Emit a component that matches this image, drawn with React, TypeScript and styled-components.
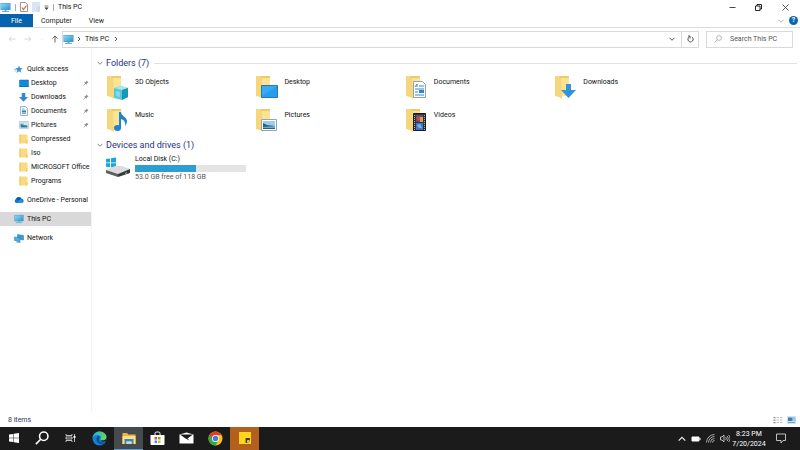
import React from "react";
import styled, { createGlobalStyle } from "styled-components";

const Global = createGlobalStyle`
  *, *::before, *::after { box-sizing: border-box; }
  body { margin: 0; background: #fff; color: #111; font: 7px/10px Roboto, "Noto Sans", sans-serif; }
  button, input { font: inherit; color: inherit; border: 0; background: none; padding: 0; margin: 0; }
  svg { display: block; flex: none; }
  a { color: inherit; text-decoration: none; }
`;

/* ---------- icons ---------- */

type Size = { size?: number };

const MonitorIcon = ({ size = 11 }: Size) => (
  <svg width={size} height={size} viewBox="0 0 22 22" aria-hidden="true">
    <defs>
      <linearGradient id="screen" x1="0" y1="0" x2="1" y2="1">
        <stop offset="0" stopColor="#8bdcf5" />
        <stop offset="1" stopColor="#2a93d5" />
      </linearGradient>
    </defs>
    <rect x="1" y="2" width="20" height="14" fill="#4a94bd" />
    <rect x="2" y="3" width="18" height="12" fill="url(#screen)" />
    <path d="M9 16h4v2H9z" fill="#7aa9c4" />
    <path d="M4 18h14v2H4z" fill="#69b3dc" />
  </svg>
);

const CheckPageIcon = () => (
  <svg width="8" height="10" viewBox="0 0 16 20" aria-hidden="true">
    <path d="M1 1h10l4 4v14H1z" fill="#fff" stroke="#7d7d7d" strokeWidth="1.6" />
    <path d="M4 11l3 4 6-8" fill="none" stroke="#c8662f" strokeWidth="2.2" />
  </svg>
);

const NewFolderIcon = () => (
  <svg width="8" height="10" viewBox="0 0 16 20" aria-hidden="true">
    <path d="M1 1h14v18H1z" fill="#dce4f2" stroke="#c9d3e6" />
    <path d="M11 19V9h4v10z" fill="#c8d2e8" />
  </svg>
);

const CustomizeIcon = () => (
  <svg width="5" height="6" viewBox="0 0 10 12" aria-hidden="true">
    <path d="M1 4h8" stroke="#555" strokeWidth="1.6" />
    <path d="M1 7h8L5 12z" fill="#333" />
  </svg>
);

const Chevron = ({ dir, color = "#444", size = 6 }: { dir: "down" | "right" | "up"; color?: string; size?: number }) => {
  const d = { down: "M1 3.5l5 5 5-5", right: "M4 2l4 4-4 4", up: "M1 8.5l5-5 5 5" }[dir];
  return (
    <svg width={size} height={size} viewBox="0 0 12 12" fill="none" aria-hidden="true">
      <path d={d} stroke={color} strokeWidth="1.8" />
    </svg>
  );
};

const ArrowIcon = ({ dir, color }: { dir: "left" | "right" | "up"; color: string }) => {
  const d = {
    left: "M15 8H2M7 3L2 8l5 5",
    right: "M1 8h13M9 3l5 5-5 5",
    up: "M8 15V2M3 7l5-5 5 5",
  }[dir];
  return (
    <svg width="8" height="8" viewBox="0 0 16 16" fill="none" aria-hidden="true">
      <path d={d} stroke={color} strokeWidth="1.8" />
    </svg>
  );
};

const MinimizeIcon = () => (
  <svg width="7" height="7" viewBox="0 0 14 14" aria-hidden="true">
    <path d="M1 7h12" stroke="#333" strokeWidth="1.8" />
  </svg>
);

const RestoreIcon = () => (
  <svg width="7" height="7" viewBox="0 0 14 14" fill="none" stroke="#111" strokeWidth="1.8" aria-hidden="true">
    <path d="M1 4h9v9H1zM4 4V1h9v9h-3" />
  </svg>
);

const CloseIcon = () => (
  <svg width="7" height="7" viewBox="0 0 14 14" stroke="#333" strokeWidth="1.6" aria-hidden="true">
    <path d="M1 1l12 12M13 1L1 13" />
  </svg>
);

const RefreshIcon = () => (
  <svg width="7" height="8" viewBox="0 0 14 16" fill="none" stroke="#444" strokeWidth="1.9" aria-hidden="true">
    <path d="M9.500 4a5.200 5.200 0 1 1-5 0M2 2h4v5" />
  </svg>
);

const SearchIcon = ({ size = 8, color = "#999", width = 1.4 }: { size?: number; color?: string; width?: number }) => (
  <svg width={size} height={size} viewBox="0 0 16 16" fill="none" stroke={color} strokeWidth={width} aria-hidden="true">
    <circle cx="10" cy="6" r="4.800" />
    <path d="M6.500 9.500L1 15" />
  </svg>
);

const StarIcon = () => (
  <svg width="9" height="9" viewBox="0 0 18 18" aria-hidden="true">
    <path d="M10 1l2 5.200 5.500.4-4.300 3.600 1.400 5.500L10 12.700l-5 3.300 1.700-5.600L2.500 6.600l5.500-.4z" fill="#3a93cf" />
    <path d="M0 9h5M1 12h4" stroke="#7dbbe0" strokeWidth="1.400" />
  </svg>
);

const DesktopIcon = () => (
  <svg width="10" height="9" viewBox="0 0 20 18" aria-hidden="true">
    <path d="M1 2h18v13H1z" fill="#1189dc" stroke="#0b6cb3" />
    <path d="M1 14h18v2H1z" fill="#0a70c0" />
  </svg>
);

const DownArrowIcon = ({ size = 9 }: Size) => (
  <svg width={size} height={size} viewBox="0 0 18 18" aria-hidden="true">
    <path d="M5.500 0h7v8H18l-9 9.500L0 8h5.500z" fill="#3289d0" />
  </svg>
);

const DocumentIcon = () => (
  <svg width="8" height="10" viewBox="0 0 16 20" aria-hidden="true">
    <path d="M1 1h10l4 4v14H1z" fill="#f4f9fc" stroke="#7c98a9" strokeWidth="1.400" />
    <path d="M4 6h5M4 9h8M4 15h8" stroke="#4d9dcc" strokeWidth="1.500" />
    <path d="M4 10h8v3H4z" fill="#2e84bd" />
  </svg>
);

const PictureIcon = () => (
  <svg width="10" height="8" viewBox="0 0 20 16" aria-hidden="true">
    <path d="M1 1h18v14H1z" fill="#e8f2f8" stroke="#8faec1" />
    <path d="M3 3h14v5H3z" fill="#9fd0ea" />
    <path d="M3 6l6 2 8 1v4H3z" fill="#34789f" />
    <path d="M10 5h7v2h-7z" fill="#fff" />
  </svg>
);

const FolderIcon = () => (
  <svg width="9" height="10" viewBox="0 0 18 20" aria-hidden="true">
    <path d="M1 1h14l2 2v16H1z" fill="#f9da80" />
    <path d="M1 1h2v18H1z" fill="#ecc45d" />
    <path d="M14 12h3v7h-3z" fill="#f1cb67" />
  </svg>
);

const CloudIcon = () => (
  <svg width="10" height="8" viewBox="0 0 20 16" aria-hidden="true">
    <path d="M5 14a4 4 0 0 1-.800-7.800A5.500 5.500 0 0 1 14.500 5 4.600 4.600 0 0 1 16 14z" fill="#1277c9" />
    <path d="M4.200 6.200A5.500 5.500 0 0 1 14.500 5L9 9z" fill="#0a5aa8" />
    <path d="M5 14l8-7.500a4.500 4.500 0 0 1 3 7.500z" fill="#2492df" />
  </svg>
);

const NetworkIcon = () => (
  <svg width="10" height="9" viewBox="0 0 20 18" aria-hidden="true">
    <path d="M7 1l12 2v9L7 10z" fill="#3b9bd2" stroke="#2a76a5" />
    <path d="M1 6l11 1.500V15L1 13z" fill="#49b1e5" stroke="#24719f" />
    <path d="M5 15h8v2H5z" fill="#3b7fa8" />
  </svg>
);

const PinIcon = () => (
  <svg width="6" height="6" viewBox="0 0 12 12" aria-hidden="true">
    <path d="M7 1l4 4-1.500.5-2 2L7 10 2 5l2.500-.5 2-2z" fill="#8a9096" />
    <path d="M4.500 7.500L1 11" stroke="#8a9096" strokeWidth="1.300" />
  </svg>
);

type FolderKind = "objects" | "desktop" | "documents" | "downloads" | "music" | "pictures" | "videos";

const badges: Record<FolderKind, React.ReactNode> = {
  objects: (
    <g>
      <path d="M9 13l7-2 7 2v9l-6 3-8-2z" fill="#58c7d8" />
      <path d="M9 13l7-2 7 2-6 2z" fill="#a7e8ef" />
      <path d="M17 15l6-2v9l-6 3z" fill="#1598b3" />
      <path d="M11 16l4 1v5l-4-1z" fill="#82dce7" />
    </g>
  ),
  desktop: (
    <g>
      <path d="M7.500 10.500h16v12h-16z" fill="#259ef0" stroke="#2677ac" />
      <path d="M8 11h15l-15 10z" fill="#39aaf4" />
    </g>
  ),
  documents: (
    <g>
      <path d="M9.500 6.500h9l3 3v13h-12z" fill="#fafdff" stroke="#8fa3b0" />
      <path d="M11 12l2-3v3M15 11h5M11 14h9M11 17h3M11 20h9" stroke="#4289bd" fill="none" />
      <path d="M15 15h5v3h-5z" fill="#3485bd" />
    </g>
  ),
  downloads: <path d="M13 9h5v6h5l-7.500 8L8 15h5z" fill="#3292da" />,
  music: (
    <g>
      <path d="M14 4h2c0 4 6 5 6 9 0 2-1 4-2 5 1-4-1-6-4-7v9h-2z" fill="#1f83cb" />
      <ellipse cx="12.500" cy="20" rx="3.500" ry="3" fill="#1f83cb" />
    </g>
  ),
  pictures: (
    <g>
      <path d="M7.500 11.500h15v11h-15z" fill="#fff" stroke="#91a7b5" />
      <path d="M9 13h12v8H9z" fill="#9bcdf0" />
      <path d="M9 15l4 2 8 1v3H9z" fill="#2d6276" />
      <path d="M9 19l12-1v2H9z" fill="#6bacca" />
    </g>
  ),
  videos: (
    <g>
      <path d="M9.500 5.500h12v17h-12z" fill="#30333b" stroke="#17191e" />
      <path d="M12 7h7v7h-7z" fill="#6a4b70" />
      <path d="M12 15h7v7h-7z" fill="#4277c2" />
      <path d="M12 10l3-2 2 2-2 3z" fill="#c64c4d" />
      <path d="M16 9h3v5h-3z" fill="#d9a441" />
      <path d="M13 17l3-1 2 4h-3z" fill="#77b8ee" />
      <path d="M10.500 7v15M20.500 7v15" stroke="#aab1bd" strokeDasharray="1 1" />
    </g>
  ),
};

const BigFolderIcon = ({ kind }: { kind: FolderKind }) => (
  <svg width="25" height="25" viewBox="0 0 25 25" aria-hidden="true">
    <path d="M6 1h10v20H6z" fill="#efca66" />
    <path d="M2 1h3l4 3v20l-3-2-4-1z" fill="#f5d67a" />
    <path d="M8 3h8v18H9z" fill="#fbe396" />
    {badges[kind]}
  </svg>
);

const DriveIcon = () => (
  <svg width="26" height="24" viewBox="0 0 26 24" aria-hidden="true">
    <path d="M1 5l4-.6v4H1zM6 4.200l5-.7v4.900H6zM1 9.300h4v4l-4-.6zM6 9.300h5v4.800l-5-.7z" fill="#1ba5dc" />
    <path d="M1 16l9-4h7l8 3-12 5z" fill="#dadcdd" />
    <path d="M1 16l12 4v3L1 19z" fill="#5c5f62" />
    <path d="M13 20l12-5v4l-12 4z" fill="#36393b" />
    <path d="M20 19.500l2-.8" stroke="#9fd18b" />
  </svg>
);

const DetailsViewIcon = () => (
  <svg width="10" height="8" viewBox="0 0 20 16" aria-hidden="true">
    <path d="M1 3h4M1 8h4M1 13h4" stroke="#8c8c8c" strokeWidth="2.500" />
    <path d="M7 3h5M14 3h5M7 8h5M14 8h5M7 13h5M14 13h5" stroke="#aaa" strokeWidth="1.500" />
  </svg>
);

const TilesViewIcon = () => (
  <svg width="9" height="8" viewBox="0 0 18 16" aria-hidden="true">
    <path d="M0 0h18v16H0z" fill="#cbe6f8" />
    <path d="M2 3h9v7H2z" fill="#3f7fb0" />
    <path d="M12 4h5M12 8h5M2 13h14" stroke="#5c90b5" strokeWidth="1.500" />
  </svg>
);

/* ---------- taskbar icons ---------- */

const WindowsIcon = () => (
  <svg width="10" height="10" viewBox="0 0 20 20" fill="#fff" aria-hidden="true">
    <path d="M0 3l8.500-1.200v7.700H0zM9.500 1.600L20 0v9.500H9.500zM0 10.500h8.500v7.700L0 17zM9.500 10.500H20V20L9.500 18.400z" />
  </svg>
);

const TaskViewIcon = () => (
  <svg width="12" height="10" viewBox="0 0 24 20" fill="none" stroke="#ddd" strokeWidth="1.700" aria-hidden="true">
    <path d="M2 2v3h12V2M2 18v-3h12v3M2 8h12v4H2zM19 2v16" />
    <path d="M17 6h4v4h-4z" fill="#fff" stroke="none" />
  </svg>
);

const EdgeIcon = () => (
  <svg width="15" height="15" viewBox="0 0 30 30" aria-hidden="true">
    <defs>
      <linearGradient id="edgeTop" x1="0" y1="0" x2="1" y2="0.400">
        <stop offset="0" stopColor="#25a9e2" />
        <stop offset="1" stopColor="#66d65e" />
      </linearGradient>
    </defs>
    <circle cx="15" cy="15" r="14" fill="#1580d4" />
    <path d="M1 14C2 6 8 1 15 1c8 0 14 5 14 11 0 5-4 7-8 7-3 0-5-1-4-3 3-5-1-8-6-8C6 8 2 10 1 14z" fill="url(#edgeTop)" />
    <path d="M11 11c-4 5-2 13 5 15 5 1 9-1 11-4-7 3-14 0-13-6 0-2 1-3 2-4-2-2-4-2-5-1z" fill="#0d4f9c" />
    <path d="M17 16c-1 2 1 3 4 3 4 0 8-2 8-6v6l-3 2c-6 1-10-1-9-5z" fill="#1b1b1b" />
  </svg>
);

const ExplorerIcon = () => (
  <svg width="14" height="13" viewBox="0 0 28 26" aria-hidden="true">
    <path d="M1 2h9l3 3h14v19H1z" fill="#e9b54a" />
    <path d="M1 8h26v16H1z" fill="#ffdf7e" />
    <path d="M5 14h18v10h-4v-5H9v5H5z" fill="#3b83b9" />
    <path d="M9 19h10v5H9z" fill="#b8dcec" />
  </svg>
);

const StoreIcon = () => (
  <svg width="15" height="15" viewBox="0 0 30 30" aria-hidden="true">
    <path d="M10 8V5a3 3 0 0 1 3-3h4a3 3 0 0 1 3 3v3" fill="none" stroke="#fff" strokeWidth="2" />
    <path d="M1 8h28v18a2 2 0 0 1-2 2H3a2 2 0 0 1-2-2z" fill="#fff" />
    <path d="M9 12h5v5H9z" fill="#e6502b" />
    <path d="M16 12h5v5h-5z" fill="#74b72b" />
    <path d="M9 19h5v5H9z" fill="#2a9de0" />
    <path d="M16 19h5v5h-5z" fill="#f5b51c" />
  </svg>
);

const MailIcon = () => (
  <svg width="15" height="12" viewBox="0 0 30 24" aria-hidden="true">
    <path d="M1 5l14-4 14 4v18H1z" fill="#fff" />
    <path d="M2 5h26L17 13l4 4-8-4z" fill="#1b1b1b" />
  </svg>
);

const ChromeIcon = () => (
  <svg width="15" height="15" viewBox="0 0 30 30" aria-hidden="true">
    <circle cx="15" cy="15" r="14" fill="#fbc116" />
    <path d="M2.900 8A14 14 0 0 1 27.100 8H15a7 7 0 0 0-6.100 10.500z" fill="#e33b2e" />
    <path d="M2.900 8A14 14 0 0 0 15 29l6.100-10.500A7 7 0 0 1 8.900 18.500z" fill="#2da94f" />
    <circle cx="15" cy="15" r="7" fill="#fff" />
    <circle cx="15" cy="15" r="5.500" fill="#3f7fe8" />
  </svg>
);

const NotesIcon = () => (
  <svg width="12" height="12" viewBox="0 0 22 22" aria-hidden="true">
    <path d="M0 0h22v22H0z" fill="#ffd51c" />
    <path d="M12 11h8v5l-4 4h-4z" fill="#4b3b14" />
    <path d="M15 20v-5h5z" fill="#fff2a0" />
  </svg>
);

const BatteryIcon = () => (
  <svg width="10" height="6" viewBox="0 0 20 12" aria-hidden="true">
    <path d="M2 2h14v8H2z" fill="#fff" stroke="#fff" strokeWidth="2" />
    <path d="M17 4h2v4h-2z" fill="#fff" />
  </svg>
);

const WifiIcon = () => (
  <svg width="9" height="9" viewBox="0 0 18 18" fill="none" stroke="#ccc" strokeWidth="1.600" aria-hidden="true">
    <path d="M1 17A16 16 0 0 1 17 1M5 17A12 12 0 0 1 17 5M9 17a8 8 0 0 1 8-8M13 17a4 4 0 0 1 4-4" />
  </svg>
);

const VolumeIcon = () => (
  <svg width="10" height="9" viewBox="0 0 20 18" fill="none" stroke="#ddd" strokeWidth="1.600" aria-hidden="true">
    <path d="M1 6h3l4-4v14l-4-4H1zM11 6c2 2 2 4 0 6M14 4c3 3 3 7 0 10M17 2c4 4 4 10 0 14" />
  </svg>
);

const ActionCenterIcon = () => (
  <svg width="10" height="11" viewBox="0 0 20 22" fill="none" stroke="#ddd" strokeWidth="1.700" aria-hidden="true">
    <path d="M1 2h18v13h-5l-4 5v-5H1z" />
  </svg>
);

/* ---------- layout ---------- */

const Window = styled.div`
  display: flex;
  flex-direction: column;
  min-height: 100vh;
`;

const TitleBar = styled.header`
  display: flex;
  align-items: center;
  justify-content: space-between;
  height: 14px;
`;

const QuickTools = styled.div`
  display: flex;
  align-items: center;
  gap: 4px;
`;

const WindowControls = styled.div`
  display: flex;
  align-items: center;
  padding-right: 2px;
`;

const Divider = styled.span`
  width: 1px;
  height: 7px;
  background: #aaa;
`;

const Title = styled.h1`
  margin: 0;
  font: inherit;
`;

const IconButton = styled.button<{ $w?: number }>`
  display: flex;
  align-items: center;
  justify-content: center;
  width: ${(p) => (p.$w ? `${p.$w}px` : "auto")};
`;

const Ribbon = styled.nav`
  display: flex;
  height: 14px;
  border-bottom: 1px solid #dcdcdc;
`;

const Tab = styled.button<{ $primary?: boolean }>`
  height: 13px;
  padding: 0 ${(p) => (p.$primary ? 11 : 8)}px;
  margin-right: ${(p) => (p.$primary ? 0 : 1)}px;
  background: ${(p) => (p.$primary ? "#0863ad" : "transparent")};
  color: ${(p) => (p.$primary ? "#fff" : "#222")};
`;

const RibbonEnd = styled.div`
  display: flex;
  align-items: center;
  gap: 5px;
  margin-left: auto;
  padding-right: 2px;
`;

const Help = styled.button`
  width: 9px;
  height: 9px;
  border-radius: 50%;
  background: #0b66b0;
  color: #fff;
  line-height: 9px;
  font-weight: 700;
`;

const AddressRow = styled.div`
  display: flex;
  align-items: center;
  height: 22px;
  padding: 0 7px 0 4px;
`;

const History = styled.div`
  display: flex;
  align-items: center;
  width: 58px;
`;

const AddressBox = styled.div`
  display: flex;
  align-items: center;
  flex: 1;
  height: 17px;
  border: 1px solid #d9d9d9;
`;

const Crumb = styled.button`
  display: flex;
  align-items: center;
  padding-right: 4px;
`;

const CrumbArrow = styled(Crumb)`
  padding: 0 3px 0 2px;
`;

const BoxEnd = styled.div`
  display: flex;
  align-items: center;
  height: 15px;
  margin-left: auto;
`;

const RefreshButton = styled(IconButton)`
  height: 15px;
  border-left: 1px solid #d9d9d9;
`;

const SearchBox = styled.label`
  display: flex;
  align-items: center;
  gap: 8px;
  width: 87px;
  height: 17px;
  margin-left: 7px;
  padding: 0 7px;
  border: 1px solid #d9d9d9;
`;

const SearchInput = styled.input`
  flex: 1;
  min-width: 0;
  outline: 0;
  &::placeholder { color: #555; opacity: 1; }
`;

const Body = styled.div`
  display: flex;
  flex: 1;
`;

const Sidebar = styled.nav`
  flex: none;
  width: 92px;
  padding-top: 12px;
  border-right: 1px solid #f4f4f4;
`;

const NavGroup = styled.ul`
  margin: 0 0 5px;
  padding: 0;
  list-style: none;
`;

const NavLink = styled.a<{ $child?: boolean; $selected?: boolean }>`
  display: flex;
  align-items: center;
  height: 14px;
  gap: ${(p) => (p.$child ? 2 : 3)}px;
  padding-left: ${(p) => (p.$child ? 18 : 13)}px;
  background: ${(p) => (p.$selected ? "#d9d9d9" : "transparent")};
  white-space: nowrap;
`;

const NavIcon = styled.span`
  display: flex;
  justify-content: center;
  flex: none;
  width: 11px;
`;

const PinSlot = styled.span`
  margin-left: auto;
  padding-right: 2px;
`;

const Main = styled.main`
  flex: 1;
  padding: 7px 3px 0 5px;
`;

const GroupHead = styled.h2`
  display: flex;
  align-items: center;
  gap: 3px;
  margin: 0;
  height: 12px;
  color: #1e3287;
  font-size: 9px;
  font-weight: 400;
  line-height: 12px;
  &::after {
    content: "";
    flex: 1;
    height: 1px;
    margin-left: 2px;
    background: #e2e2e2;
  }
  &:last-of-type::after { background: transparent; }
`;

const Tiles = styled.div`
  display: grid;
  grid-template-columns: repeat(4, minmax(0, 149fr)) minmax(0, 94fr);
  grid-auto-rows: 33px;
  padding: 6px 0 0 8px;
  margin-bottom: -2px;
`;

const Tile = styled.button`
  display: flex;
  align-items: flex-start;
  gap: 5px;
  text-align: left;
  &:nth-child(5) { grid-column: 1; }
`;

const TileName = styled.span`
  padding-top: 2px;
`;

const Drive = styled.button`
  display: flex;
  align-items: flex-start;
  gap: 4px;
  padding: 3px 0 0 8px;
  text-align: left;
`;

const DriveInfo = styled.span`
  display: flex;
  flex-direction: column;
  width: 111px;
`;

const Meter = styled.span`
  display: block;
  height: 7px;
  margin-top: 1px;
  background: #e4e4e4;
`;

const MeterFill = styled.span`
  display: block;
  height: 7px;
  background: #2c9ed3;
`;

const FreeSpace = styled.span`
  color: #555;
`;

const StatusBar = styled.footer`
  display: flex;
  align-items: center;
  justify-content: space-between;
  height: 14px;
  padding: 0 4px 0 8px;
  color: #2c3c55;
`;

const ViewButtons = styled.div`
  display: flex;
  gap: 4px;
`;

const Taskbar = styled.div`
  display: flex;
  align-items: stretch;
  justify-content: space-between;
  height: 23px;
  background: #1b1b1b;
  color: #fff;
`;

const Apps = styled.div`
  display: flex;
`;

const AppButton = styled.button<{ $state?: "active" | "alert" }>`
  display: flex;
  align-items: center;
  justify-content: center;
  width: 29px;
  background: ${(p) => (p.$state === "active" ? "#474a4c" : p.$state === "alert" ? "#b3601f" : "transparent")};
  border-bottom: 1px solid ${(p) => (p.$state === "active" ? "#5b9bd0" : "transparent")};
  &:nth-child(-n + 2) { width: 28px; }
`;

const Tray = styled.div`
  display: flex;
  align-items: center;
  gap: 2px;
  padding-right: 14px;
`;

const TrayIcons = styled.div`
  display: flex;
  align-items: center;
  gap: 5px;
`;

const Clock = styled.time`
  width: 34px;
  margin-right: 8px;
  text-align: center;
`;

const pinned = [
  { name: "Desktop", icon: <DesktopIcon />, pin: true },
  { name: "Downloads", icon: <DownArrowIcon />, pin: true },
  { name: "Documents", icon: <DocumentIcon />, pin: true },
  { name: "Pictures", icon: <PictureIcon />, pin: true },
  { name: "Compressed", icon: <FolderIcon /> },
  { name: "Iso", icon: <FolderIcon /> },
  { name: "MICROSOFT Office", icon: <FolderIcon /> },
  { name: "Programs", icon: <FolderIcon /> },
];

const places = [
  { name: "OneDrive - Personal", icon: <CloudIcon /> },
  { name: "This PC", icon: <MonitorIcon size={10} />, selected: true },
  { name: "Network", icon: <NetworkIcon /> },
];

const folders: { name: string; kind: FolderKind }[] = [
  { name: "3D Objects", kind: "objects" },
  { name: "Desktop", kind: "desktop" },
  { name: "Documents", kind: "documents" },
  { name: "Downloads", kind: "downloads" },
  { name: "Music", kind: "music" },
  { name: "Pictures", kind: "pictures" },
  { name: "Videos", kind: "videos" },
];

const apps: { name: string; icon: React.ReactNode; state?: "active" | "alert" }[] = [
  { name: "Start", icon: <WindowsIcon /> },
  { name: "Search", icon: <SearchIcon size={14} color="#fff" width={1.800} /> },
  { name: "Task view", icon: <TaskViewIcon /> },
  { name: "Edge", icon: <EdgeIcon /> },
  { name: "File Explorer", icon: <ExplorerIcon />, state: "active" },
  { name: "Store", icon: <StoreIcon /> },
  { name: "Mail", icon: <MailIcon /> },
  { name: "Chrome", icon: <ChromeIcon /> },
  { name: "Sticky Notes", icon: <NotesIcon />, state: "alert" },
];

export default function App() {
  const used = 65 / 118;
  return (
    <>
      <Global />
      <Window>
        <TitleBar>
          <QuickTools>
            <MonitorIcon />
            <Divider />
            <IconButton aria-label="Properties"><CheckPageIcon /></IconButton>
            <IconButton aria-label="New folder"><NewFolderIcon /></IconButton>
            <IconButton aria-label="Customize toolbar"><CustomizeIcon /></IconButton>
            <Divider />
            <Title>This PC</Title>
          </QuickTools>
          <WindowControls>
            <IconButton $w={26} aria-label="Minimize"><MinimizeIcon /></IconButton>
            <IconButton $w={27} aria-label="Restore"><RestoreIcon /></IconButton>
            <IconButton $w={26} aria-label="Close"><CloseIcon /></IconButton>
          </WindowControls>
        </TitleBar>

        <Ribbon aria-label="Ribbon">
          <Tab $primary>File</Tab>
          <Tab>Computer</Tab>
          <Tab>View</Tab>
          <RibbonEnd>
            <IconButton aria-label="Expand ribbon"><Chevron dir="down" color="#aaa" /></IconButton>
            <Help aria-label="Help">?</Help>
          </RibbonEnd>
        </Ribbon>

        <AddressRow>
          <History>
            <IconButton $w={16} aria-label="Back"><ArrowIcon dir="left" color="#d4d4d4" /></IconButton>
            <IconButton $w={16} aria-label="Forward"><ArrowIcon dir="right" color="#d4d4d4" /></IconButton>
            <IconButton $w={12} aria-label="Recent locations"><Chevron dir="down" color="#ddd" size={4} /></IconButton>
            <IconButton $w={14} aria-label="Up"><ArrowIcon dir="up" color="#555" /></IconButton>
          </History>
          <AddressBox>
            <MonitorIcon />
            <CrumbArrow aria-label="Root"><Chevron dir="right" /></CrumbArrow>
            <Crumb as="a" href="#this-pc">This PC</Crumb>
            <Chevron dir="right" />
            <BoxEnd>
              <IconButton $w={18} aria-label="Previous locations"><Chevron dir="down" /></IconButton>
              <RefreshButton $w={17} aria-label="Refresh"><RefreshIcon /></RefreshButton>
            </BoxEnd>
          </AddressBox>
          <SearchBox>
            <SearchIcon />
            <SearchInput aria-label="Search This PC" placeholder="Search This PC" />
          </SearchBox>
        </AddressRow>

        <Body>
          <Sidebar aria-label="Navigation pane">
            <NavGroup>
              <li>
                <NavLink href="#quick-access"><NavIcon><StarIcon /></NavIcon>Quick access</NavLink>
              </li>
              {pinned.map((p) => (
                <li key={p.name}>
                  <NavLink $child href={`#${p.name}`}>
                    <NavIcon>{p.icon}</NavIcon>
                    {p.name}
                    {p.pin && <PinSlot><PinIcon /></PinSlot>}
                  </NavLink>
                </li>
              ))}
            </NavGroup>
            {places.map((p) => (
              <NavGroup key={p.name}>
                <li>
                  <NavLink href={`#${p.name}`} $selected={p.selected}>
                    <NavIcon>{p.icon}</NavIcon>
                    {p.name}
                  </NavLink>
                </li>
              </NavGroup>
            ))}
          </Sidebar>

          <Main>
            <GroupHead><Chevron dir="down" color="#777" />Folders (7)</GroupHead>
            <Tiles>
              {folders.map((f) => (
                <Tile key={f.name}>
                  <BigFolderIcon kind={f.kind} />
                  <TileName>{f.name}</TileName>
                </Tile>
              ))}
            </Tiles>
            <GroupHead><Chevron dir="down" color="#777" />Devices and drives (1)</GroupHead>
            <Drive>
              <DriveIcon />
              <DriveInfo>
                <span>Local Disk (C:)</span>
                <Meter><MeterFill style={{ width: `${used * 100}%` }} /></Meter>
                <FreeSpace>53.0 GB free of 118 GB</FreeSpace>
              </DriveInfo>
            </Drive>
          </Main>
        </Body>

        <StatusBar>
          <span>8 items</span>
          <ViewButtons>
            <IconButton aria-label="Details view"><DetailsViewIcon /></IconButton>
            <IconButton aria-label="Tiles view"><TilesViewIcon /></IconButton>
          </ViewButtons>
        </StatusBar>

        <Taskbar>
          <Apps>
            {apps.map((a) => (
              <AppButton key={a.name} aria-label={a.name} $state={a.state}>{a.icon}</AppButton>
            ))}
          </Apps>
          <Tray>
            <TrayIcons>
              <IconButton aria-label="Show hidden icons"><Chevron dir="up" color="#eee" size={8} /></IconButton>
              <BatteryIcon />
              <WifiIcon />
              <VolumeIcon />
            </TrayIcons>
            <Clock>8:23 PM<br />7/20/2024</Clock>
            <IconButton aria-label="Notifications"><ActionCenterIcon /></IconButton>
          </Tray>
        </Taskbar>
      </Window>
    </>
  );
}
